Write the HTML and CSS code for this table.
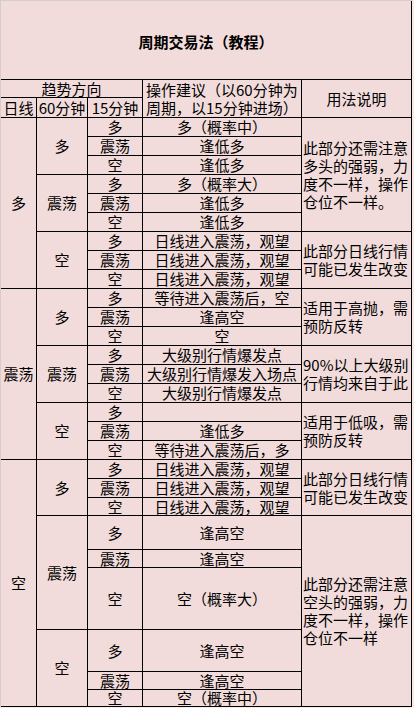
FILE: index.html
```html
<!DOCTYPE html>
<html lang="zh-CN">
<head>
<meta charset="utf-8">
<title>周期交易法（教程）</title>
<link rel="stylesheet" href="styles.css">
</head>
<body>
<div class="sheet">
<table class="grid">
<colgroup>
<col class="c-day"><col class="c-hour"><col class="c-min"><col class="c-op"><col class="c-note">
</colgroup>
<tbody>
<tr class="r-title"><td colspan="5" class="title">周期交易法（教程）</td></tr>
<tr class="r-h1"><td colspan="3">趋势方向</td><td rowspan="2" class="op-head">操作建议（以60分钟为周期，以15分钟进场）</td><td rowspan="2">用法说明</td></tr>
<tr class="r-h2"><td>日线</td><td>60分钟</td><td>15分钟</td></tr>

<tr><td rowspan="9">多</td><td rowspan="3">多</td><td>多</td><td class="op">多（概率中）</td><td rowspan="6" class="note">此部分还需注意多头的强弱，力度不一样，操作仓位不一样。</td></tr>
<tr><td>震荡</td><td class="op">逢低多</td></tr>
<tr><td>空</td><td class="op">逢低多</td></tr>
<tr><td rowspan="3">震荡</td><td>多</td><td class="op">多（概率大）</td></tr>
<tr><td>震荡</td><td class="op">逢低多</td></tr>
<tr><td>空</td><td class="op">逢低多</td></tr>
<tr><td rowspan="3">空</td><td>多</td><td class="op">日线进入震荡，观望</td><td rowspan="3" class="note">此部分日线行情可能已发生改变</td></tr>
<tr><td>震荡</td><td class="op">日线进入震荡，观望</td></tr>
<tr><td>空</td><td class="op">日线进入震荡，观望</td></tr>

<tr><td rowspan="9">震荡</td><td rowspan="3">多</td><td>多</td><td class="op">等待进入震荡后，空</td><td rowspan="3" class="note">适用于高抛，需预防反转</td></tr>
<tr><td>震荡</td><td class="op">逢高空</td></tr>
<tr><td>空</td><td class="op">空</td></tr>
<tr><td rowspan="3">震荡</td><td>多</td><td class="op">大级别行情爆发点</td><td rowspan="3" class="note">90%以上大级别行情均来自于此</td></tr>
<tr><td>震荡</td><td class="op">大级别行情爆发入场点</td></tr>
<tr><td>空</td><td class="op">大级别行情爆发点</td></tr>
<tr><td rowspan="3">空</td><td>多</td><td class="op"></td><td rowspan="3" class="note">适用于低吸，需预防反转</td></tr>
<tr><td>震荡</td><td class="op">逢低多</td></tr>
<tr><td>空</td><td class="op">等待进入震荡后，多</td></tr>

<tr><td rowspan="9">空</td><td rowspan="3">多</td><td>多</td><td class="op">日线进入震荡，观望</td><td rowspan="3" class="note">此部分日线行情可能已发生改变</td></tr>
<tr><td>震荡</td><td class="op">日线进入震荡，观望</td></tr>
<tr class="r18"><td>空</td><td class="op">日线进入震荡，观望</td></tr>
<tr class="r34"><td rowspan="3">震荡</td><td>多</td><td class="op">逢高空</td><td rowspan="6" class="note">此部分还需注意空头的强弱，力度不一样，操作仓位不一样</td></tr>
<tr class="r18"><td>震荡</td><td class="op">逢高空</td></tr>
<tr class="r62"><td>空</td><td class="op">空（概率大）</td></tr>
<tr class="r42"><td rowspan="3">空</td><td>多</td><td class="op">逢高空</td></tr>
<tr class="r18"><td>震荡</td><td class="op">逢高空</td></tr>
<tr class="r17"><td>空</td><td class="op">空（概率中）</td></tr>
</tbody>
</table>
</div>
</body>
</html>
```

FILE: styles.css
```css
html, body {
  margin: 0;
  padding: 0;
}
body {
  background: #f7eaea;
  width: 414px;
  height: 708px;
  overflow: hidden;
  font-family: "Noto Sans CJK SC", "Noto Sans", sans-serif;
  font-size: 15px;
  color: #000;
}
.sheet {
  width: 411px;
  border-left: 1px solid #d6cccc;
  border-top: 1px solid #d6cccc;
  background: #f2dcdb;
}
.grid {
  width: 411px;
  table-layout: fixed;
  border-collapse: separate;
  border-spacing: 0;
}
.c-day { width: 36px; }
.c-hour { width: 51px; }
.c-min { width: 55px; }
.c-op { width: 159px; }
.c-note { width: 110px; }
.grid td {
  box-sizing: border-box;
  padding: 0;
  border-right: 1px solid #000;
  border-bottom: 1px solid #000;
  text-align: center;
  vertical-align: middle;
  line-height: 16px;
  white-space: nowrap;
}
.grid tr { height: 19px; }
.grid tr.r-title { height: 79px; }
.grid tr.r-h1 { height: 18px; }
.grid tr.r-h2 { height: 20px; }
.grid tr.r17 { height: 17px; }
.grid tr.r18 { height: 18px; }
.grid tr.r34 { height: 34px; }
.grid tr.r42 { height: 42px; }
.grid tr.r62 { height: 62px; }
.grid td.title {
  font-weight: bold;
  font-size: 15px;
  padding-top: 3px;
}
.grid td.op-head {
  white-space: normal;
  text-align: left;
  padding-left: 3px;
  line-height: 18px;
}
.grid td.note {
  white-space: normal;
  text-align: left;
  padding-left: 1px;
  line-height: 18px;
}
```
